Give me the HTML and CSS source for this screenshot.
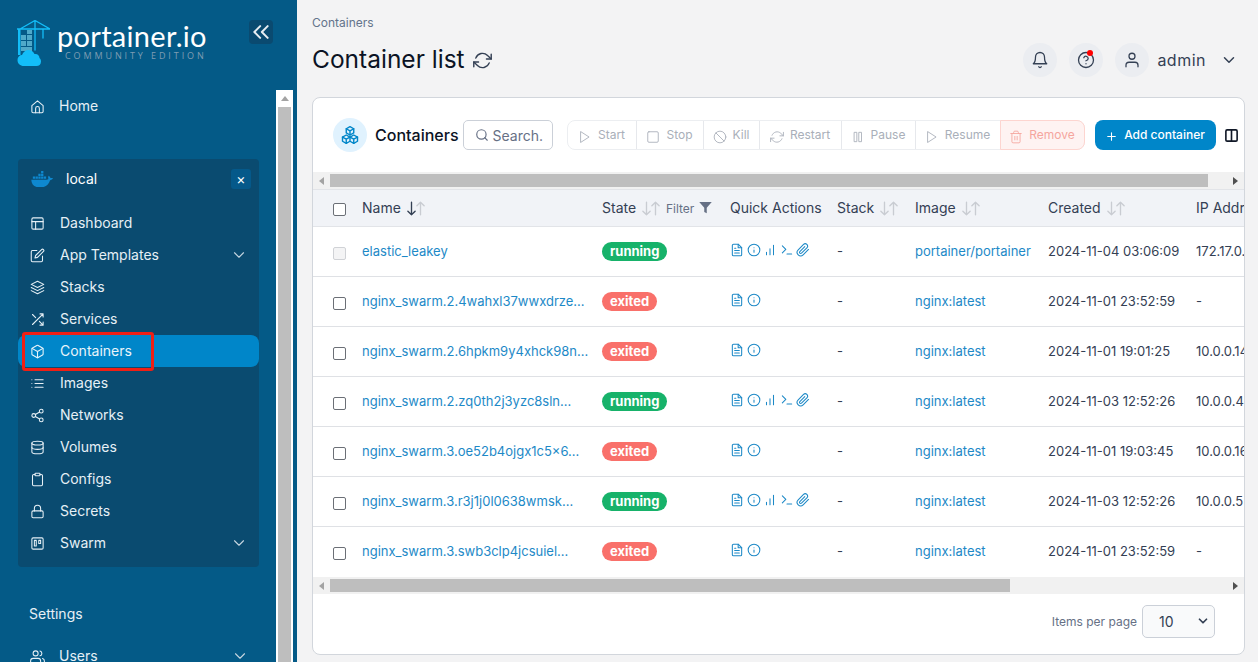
FILE: index.html
```html
<!DOCTYPE html>
<html lang="en">
<head>
    <meta charset="UTF-8">
    <meta name="viewport" content="width=device-width, initial-scale=1.0">
    <title>Portainer - Containers</title>
    <link rel="stylesheet" href="styles.css">
</head>
<body>
    <svg class="sprite" aria-hidden="true">
        <symbol id="i-home" viewBox="0 0 24 24"><path d="M3 10.5 12 3l9 7.5V20a2 2 0 0 1-2 2H5a2 2 0 0 1-2-2z"/><path d="M9 22v-7a3 3 0 0 1 6 0v7"/></symbol>
        <symbol id="i-layout" viewBox="0 0 24 24"><rect x="3" y="3" width="18" height="18" rx="2"/><path d="M3 9h18M9 21V9"/></symbol>
        <symbol id="i-edit" viewBox="0 0 24 24"><path d="M11 4H4a2 2 0 0 0-2 2v14a2 2 0 0 0 2 2h14a2 2 0 0 0 2-2v-7"/><path d="M18.5 2.5a2.121 2.121 0 0 1 3 3L12 15l-4 1 1-4z"/></symbol>
        <symbol id="i-layers" viewBox="0 0 24 24"><path d="m12 2 10 5-10 5L2 7z"/><path d="m2 12 10 5 10-5"/><path d="m2 17 10 5 10-5"/></symbol>
        <symbol id="i-shuffle" viewBox="0 0 24 24"><path d="M16 3h5v5M4 20 21 3M21 16v5h-5M15 15l6 6M4 4l5 5"/></symbol>
        <symbol id="i-box" viewBox="0 0 24 24"><path d="M21 16V8a2 2 0 0 0-1-1.73l-7-4a2 2 0 0 0-2 0l-7 4A2 2 0 0 0 3 8v8a2 2 0 0 0 1 1.73l7 4a2 2 0 0 0 2 0l7-4A2 2 0 0 0 21 16z"/><path d="M3.27 6.96 12 12.01l8.73-5.05M12 22.08V12"/></symbol>
        <symbol id="i-list" viewBox="0 0 24 24"><path d="M8 6h13M8 12h13M8 18h13M3 6h.01M3 12h.01M3 18h.01"/></symbol>
        <symbol id="i-share" viewBox="0 0 24 24"><circle cx="18" cy="5" r="3"/><circle cx="6" cy="12" r="3"/><circle cx="18" cy="19" r="3"/><path d="m8.59 13.51 6.83 3.98M15.41 6.51l-6.82 3.98"/></symbol>
        <symbol id="i-database" viewBox="0 0 24 24"><ellipse cx="12" cy="5" rx="9" ry="3"/><path d="M21 12c0 1.66-4 3-9 3s-9-1.34-9-3"/><path d="M3 5v14c0 1.66 4 3 9 3s9-1.34 9-3V5"/></symbol>
        <symbol id="i-clipboard" viewBox="0 0 24 24"><path d="M16 4h2a2 2 0 0 1 2 2v14a2 2 0 0 1-2 2H6a2 2 0 0 1-2-2V6a2 2 0 0 1 2-2h2"/><rect x="8" y="2" width="8" height="4" rx="1"/></symbol>
        <symbol id="i-lock" viewBox="0 0 24 24"><rect x="3" y="11" width="18" height="11" rx="2"/><path d="M7 11V7a5 5 0 0 1 10 0v4"/></symbol>
        <symbol id="i-trello" viewBox="0 0 24 24"><rect x="3" y="3" width="18" height="18" rx="2"/><rect x="7" y="7" width="3" height="9"/><rect x="14" y="7" width="3" height="5"/></symbol>
        <symbol id="i-users" viewBox="0 0 24 24"><path d="M17 21v-2a4 4 0 0 0-4-4H5a4 4 0 0 0-4 4v2"/><circle cx="9" cy="7" r="4"/><path d="M23 21v-2a4 4 0 0 0-3-3.87M16 3.13a4 4 0 0 1 0 7.75"/></symbol>
        <symbol id="i-chevron" viewBox="0 0 24 24"><path d="m6 9 6 6 6-6"/></symbol>
        <symbol id="i-bell" viewBox="0 0 24 24"><path d="M18 8A6 6 0 0 0 6 8c0 7-3 9-3 9h18s-3-2-3-9"/><path d="M13.73 21a2 2 0 0 1-3.46 0"/></symbol>
        <symbol id="i-help" viewBox="0 0 24 24"><circle cx="12" cy="12" r="10"/><path d="M9.09 9a3 3 0 0 1 5.83 1c0 2-3 3-3 3M12 17h.01"/></symbol>
        <symbol id="i-user" viewBox="0 0 24 24"><path d="M20 21v-2a4 4 0 0 0-4-4H8a4 4 0 0 0-4 4v2"/><circle cx="12" cy="7" r="4"/></symbol>
        <symbol id="i-refresh" viewBox="0 0 24 24"><path d="M23 4v6h-6M1 20v-6h6"/><path d="M3.51 9a9 9 0 0 1 14.85-3.36L23 10M1 14l4.64 4.36A9 9 0 0 0 20.49 15"/></symbol>
        <symbol id="i-search" viewBox="0 0 24 24"><circle cx="11" cy="11" r="8"/><path d="m21 21-4.35-4.35"/></symbol>
        <symbol id="i-play" viewBox="0 0 24 24"><path d="m5 3 14 9-14 9z"/></symbol>
        <symbol id="i-square" viewBox="0 0 24 24"><rect x="3" y="3" width="18" height="18" rx="2"/></symbol>
        <symbol id="i-slash" viewBox="0 0 24 24"><circle cx="12" cy="12" r="10"/><path d="m4.93 4.93 14.14 14.14"/></symbol>
        <symbol id="i-pause" viewBox="0 0 24 24"><rect x="6" y="4" width="4" height="16"/><rect x="14" y="4" width="4" height="16"/></symbol>
        <symbol id="i-trash" viewBox="0 0 24 24"><path d="M3 6h18M19 6v14a2 2 0 0 1-2 2H7a2 2 0 0 1-2-2V6m3 0V4a2 2 0 0 1 2-2h4a2 2 0 0 1 2 2v2M10 11v6M14 11v6"/></symbol>
        <symbol id="i-plus" viewBox="0 0 24 24"><path d="M12 5v14M5 12h14"/></symbol>
        <symbol id="i-columns" viewBox="0 0 24 24"><rect x="3" y="3" width="18" height="18" rx="2"/><path d="M12 3v18"/></symbol>
        <symbol id="i-file" viewBox="0 0 24 24"><path d="M14 2H6a2 2 0 0 0-2 2v16a2 2 0 0 0 2 2h12a2 2 0 0 0 2-2V8z"/><path d="M14 2v6h6M16 13H8M16 17H8M10 9H8"/></symbol>
        <symbol id="i-info" viewBox="0 0 24 24"><circle cx="12" cy="12" r="10"/><path d="M12 16v-4M12 8h.01"/></symbol>
        <symbol id="i-stats" viewBox="0 0 24 24"><path d="M18 20V4M12 20V10M6 20v-4"/></symbol>
        <symbol id="i-terminal" viewBox="0 0 24 24"><path d="m4 17 6-6-6-6M12 19h8"/></symbol>
        <symbol id="i-clip" viewBox="0 0 24 24"><path d="m21.44 11.05-9.19 9.19a6 6 0 0 1-8.49-8.49l9.19-9.19a4 4 0 0 1 5.66 5.66l-9.2 9.19a2 2 0 0 1-2.83-2.83l8.49-8.48"/></symbol>
        <symbol id="i-down" viewBox="0 0 10 16"><path d="M5 1v14M1 11l4 4 4-4"/></symbol>
        <symbol id="i-up" viewBox="0 0 10 16"><path d="M5 15V1M1 5l4-4 4 4"/></symbol>
        <symbol id="i-cubes" viewBox="0 0 24 24"><path d="m12 2 4.500 2.500v5L12 12 7.500 9.500v-5zM7.500 12 12 14.500v5L7.500 22 3 19.500v-5zM16.500 12l4.500 2.500v5L16.500 22 12 19.500v-5z"/><path d="m7.500 4.500 4.500 2.500 4.500-2.500M12 7v5M3 14.500l4.500 2.500 4.500-2.500M7.500 17v5M12 14.500l4.500 2.500 4.500-2.500M16.500 17v5"/></symbol>
    </svg>

    <aside class="sidebar">
        <div class="side_head">
            <div class="logo">
                <svg class="logo_mark" viewBox="0 0 33 46">
                    <g fill="none" stroke="#13bef9" stroke-width="1.300">
                        <path d="M0 9h33M18 .5V30M18 .5 3 9M18 .5 33 9M26 9v9"/>
                    </g>
                    <path fill="#13bef9" d="M1 9h2.500v26H1z"/>
                    <path fill="#4fa9c9" d="M4 15h5v5H4zM10 15h5v5h-5zM4 21h5v5H4zM10 21h5v5h-5zM10 10h5v4h-5zM4 27h11v4H4z"/>
                    <path fill="#13bef9" d="M7 46c-4 0-6.500-2.500-6.500-6 0-3 2-5 4.500-5 1-3 3.500-5 6.500-5 3 0 5 2 6 4 3-.5 5 1.500 5 4 1 1 1.500 2 1.500 3.500 0 3-2 4.500-4.500 4.500z"/>
                </svg>
                <div class="logo_text">
                    <div class="logo_name">portainer.io</div>
                    <div class="logo_edition">COMMUNITY EDITION</div>
                </div>
            </div>
            <button class="collapse_btn"><svg viewBox="0 0 24 24"><path d="m11 5-7 7 7 7M20 5l-7 7 7 7"/></svg></button>
        </div>
        <div class="side_body">
            <div class="side_scroll">
                <a class="home_link"><svg class="ico"><use href="#i-home"/></svg>Home</a>
                <div class="env_panel">
                    <div class="env_head">
                        <svg class="docker" viewBox="0 -2 24 18">
                            <path fill="#0e88cf" d="M5 4h2.500v2.500H5zM8 4h2.500v2.500H8zM11 4h2.500v2.500H11zM8 1h2.500v2.500H8zM11 1h2.500v2.500H11zM11-2h2.500V.5H11zM2 4h2.500v2.500H2zM14 4h2.500v2.500H14z"/>
                            <path fill="#0e88cf" d="M.3 7.500h16.500c1 0 1.800-.3 2.300-.8-.6-1-.7-2.500.2-3.500 1 .6 1.700 1.500 1.900 2.500 1-.3 2.100-.2 2.800.3-.6 1.300-1.800 2-3.200 2C19.500 12.500 16 16 10 16c-6 0-9.500-3-9.700-8.500z"/>
                        </svg>
                        <span class="env_name">local</span>
                        <span class="env_close">×</span>
                    </div>
                    <a class="nav_item"><svg class="ico"><use href="#i-layout"/></svg>Dashboard</a>
                    <a class="nav_item"><svg class="ico"><use href="#i-edit"/></svg>App Templates<svg class="chev"><use href="#i-chevron"/></svg></a>
                    <a class="nav_item"><svg class="ico"><use href="#i-layers"/></svg>Stacks</a>
                    <a class="nav_item"><svg class="ico"><use href="#i-shuffle"/></svg>Services</a>
                    <a class="nav_item active"><svg class="ico"><use href="#i-box"/></svg>Containers<span class="annot"></span></a>
                    <a class="nav_item"><svg class="ico"><use href="#i-list"/></svg>Images</a>
                    <a class="nav_item"><svg class="ico"><use href="#i-share"/></svg>Networks</a>
                    <a class="nav_item"><svg class="ico"><use href="#i-database"/></svg>Volumes</a>
                    <a class="nav_item"><svg class="ico"><use href="#i-clipboard"/></svg>Configs</a>
                    <a class="nav_item"><svg class="ico"><use href="#i-lock"/></svg>Secrets</a>
                    <a class="nav_item"><svg class="ico"><use href="#i-trello"/></svg>Swarm<svg class="chev"><use href="#i-chevron"/></svg></a>
                </div>
                <div class="settings_title">Settings</div>
                <a class="home_link"><svg class="ico"><use href="#i-users"/></svg>Users<svg class="chev"><use href="#i-chevron"/></svg></a>
            </div>
            <div class="vbar">
                <span class="vbar_arrow"></span>
                <span class="vbar_thumb"></span>
            </div>
        </div>
    </aside>

    <main class="main">
        <header class="topbar">
            <div>
                <div class="crumb">Containers</div>
                <h1 class="page_title">Container list <svg class="title_refresh"><use href="#i-refresh"/></svg></h1>
            </div>
            <div class="user_area">
                <span class="round_btn"><svg><use href="#i-bell"/></svg></span>
                <span class="round_btn"><svg><use href="#i-help"/></svg><i class="red_dot"></i></span>
                <span class="round_btn"><svg><use href="#i-user"/></svg></span>
                <span class="user_name">admin</span>
                <svg class="user_chev"><use href="#i-chevron"/></svg>
            </div>
        </header>

        <section class="card">
            <div class="toolbar">
                <span class="title_ico"><svg><use href="#i-cubes"/></svg></span>
                <span class="card_title">Containers</span>
                <span class="search"><svg><use href="#i-search"/></svg>Search.</span>
                <div class="btn_group">
                    <span class="w_start"><svg><use href="#i-play"/></svg>Start</span>
                    <span class="w_stop"><svg><use href="#i-square"/></svg>Stop</span>
                    <span class="w_kill"><svg><use href="#i-slash"/></svg>Kill</span>
                    <span class="w_restart"><svg><use href="#i-refresh"/></svg>Restart</span>
                    <span class="w_pause"><svg><use href="#i-pause"/></svg>Pause</span>
                    <span class="w_resume"><svg><use href="#i-play"/></svg>Resume</span>
                    <span class="w_remove"><svg><use href="#i-trash"/></svg>Remove</span>
                </div>
                <span class="add_btn"><svg><use href="#i-plus"/></svg>Add container</span>
                <svg class="col_toggle"><use href="#i-columns"/></svg>
            </div>

            <div class="hbar">
                <span class="hbar_left"></span>
                <span class="hbar_thumb thumb_top"></span>
                <span class="hbar_right"></span>
            </div>

            <div class="table_wrap">
                <table class="tbl">
                    <colgroup>
                        <col class="c_check"><col class="c_name"><col class="c_state"><col class="c_quick"><col class="c_stack"><col class="c_image"><col class="c_created"><col class="c_ip">
                    </colgroup>
                    <thead>
                        <tr>
                            <th class="cell_check"><span class="box"></span></th>
                            <th>Name <span class="sort sort_on"><svg><use href="#i-down"/></svg><svg><use href="#i-up"/></svg></span></th>
                            <th>State <span class="sort"><svg><use href="#i-down"/></svg><svg><use href="#i-up"/></svg></span> <span class="filter">Filter <svg viewBox="0 0 24 24"><path d="M22 3H2l8 9.460V19l4 2v-8.540z"/></svg></span></th>
                            <th>Quick Actions</th>
                            <th>Stack <span class="sort"><svg><use href="#i-down"/></svg><svg><use href="#i-up"/></svg></span></th>
                            <th>Image <span class="sort"><svg><use href="#i-down"/></svg><svg><use href="#i-up"/></svg></span></th>
                            <th>Created <span class="sort"><svg><use href="#i-down"/></svg><svg><use href="#i-up"/></svg></span></th>
                            <th>IP Address</th>
                        </tr>
                    </thead>
                    <tbody>
                        <tr>
                            <td class="cell_check"><span class="box box_off"></span></td>
                            <td><a class="lnk">elastic_leakey</a></td>
                            <td><span class="badge run">running</span></td>
                            <td class="quick"><svg><use href="#i-file"/></svg><svg><use href="#i-info"/></svg><svg><use href="#i-stats"/></svg><svg><use href="#i-terminal"/></svg><svg><use href="#i-clip"/></svg></td>
                            <td>-</td>
                            <td><a class="lnk">portainer/portainer</a></td>
                            <td>2024-11-04 03:06:09</td>
                            <td>172.17.0.2</td>
                        </tr>
                        <tr>
                            <td class="cell_check"><span class="box"></span></td>
                            <td><a class="lnk">nginx_swarm.2.4wahxl37wwxdrze...</a></td>
                            <td><span class="badge off">exited</span></td>
                            <td class="quick"><svg><use href="#i-file"/></svg><svg><use href="#i-info"/></svg></td>
                            <td>-</td>
                            <td><a class="lnk">nginx:latest</a></td>
                            <td>2024-11-01 23:52:59</td>
                            <td>-</td>
                        </tr>
                        <tr>
                            <td class="cell_check"><span class="box"></span></td>
                            <td><a class="lnk">nginx_swarm.2.6hpkm9y4xhck98n...</a></td>
                            <td><span class="badge off">exited</span></td>
                            <td class="quick"><svg><use href="#i-file"/></svg><svg><use href="#i-info"/></svg></td>
                            <td>-</td>
                            <td><a class="lnk">nginx:latest</a></td>
                            <td>2024-11-01 19:01:25</td>
                            <td>10.0.0.14</td>
                        </tr>
                        <tr>
                            <td class="cell_check"><span class="box"></span></td>
                            <td><a class="lnk">nginx_swarm.2.zq0th2j3yzc8sln...</a></td>
                            <td><span class="badge run">running</span></td>
                            <td class="quick"><svg><use href="#i-file"/></svg><svg><use href="#i-info"/></svg><svg><use href="#i-stats"/></svg><svg><use href="#i-terminal"/></svg><svg><use href="#i-clip"/></svg></td>
                            <td>-</td>
                            <td><a class="lnk">nginx:latest</a></td>
                            <td>2024-11-03 12:52:26</td>
                            <td>10.0.0.4</td>
                        </tr>
                        <tr>
                            <td class="cell_check"><span class="box"></span></td>
                            <td><a class="lnk">nginx_swarm.3.oe52b4ojgx1c5×6...</a></td>
                            <td><span class="badge off">exited</span></td>
                            <td class="quick"><svg><use href="#i-file"/></svg><svg><use href="#i-info"/></svg></td>
                            <td>-</td>
                            <td><a class="lnk">nginx:latest</a></td>
                            <td>2024-11-01 19:03:45</td>
                            <td>10.0.0.16</td>
                        </tr>
                        <tr>
                            <td class="cell_check"><span class="box"></span></td>
                            <td><a class="lnk">nginx_swarm.3.r3j1j0l0638wmsk...</a></td>
                            <td><span class="badge run">running</span></td>
                            <td class="quick"><svg><use href="#i-file"/></svg><svg><use href="#i-info"/></svg><svg><use href="#i-stats"/></svg><svg><use href="#i-terminal"/></svg><svg><use href="#i-clip"/></svg></td>
                            <td>-</td>
                            <td><a class="lnk">nginx:latest</a></td>
                            <td>2024-11-03 12:52:26</td>
                            <td>10.0.0.5</td>
                        </tr>
                        <tr>
                            <td class="cell_check"><span class="box"></span></td>
                            <td><a class="lnk">nginx_swarm.3.swb3clp4jcsuiel...</a></td>
                            <td><span class="badge off">exited</span></td>
                            <td class="quick"><svg><use href="#i-file"/></svg><svg><use href="#i-info"/></svg></td>
                            <td>-</td>
                            <td><a class="lnk">nginx:latest</a></td>
                            <td>2024-11-01 23:52:59</td>
                            <td>-</td>
                        </tr>
                    </tbody>
                </table>
            </div>

            <div class="hbar">
                <span class="hbar_left"></span>
                <span class="hbar_thumb thumb_bottom"></span>
                <span class="hbar_right"></span>
            </div>

            <div class="pager">
                <span>Items per page</span>
                <span class="page_select">10<svg><use href="#i-chevron"/></svg></span>
            </div>
        </section>
    </main>
</body>
</html>
```

FILE: styles.css
```css
* {
    box-sizing: border-box;
}
body {
    margin: 0;
    display: flex;
    height: 662px;
    overflow: hidden;
    background: #f3f3f4;
    color: #1f2937;
    font-family: Inter, "Noto Sans", sans-serif;
    font-size: 13px;
}
.sprite {
    display: none;
}
svg {
    fill: none;
    stroke: currentColor;
    stroke-width: 2;
    stroke-linecap: round;
    stroke-linejoin: round;
}

/* sidebar */
.sidebar {
    flex: 0 0 297px;
    height: 662px;
    background: #045a87;
    color: #e6f0f6;
    display: flex;
    flex-direction: column;
    padding-right: 4px;
}
.side_head {
    flex: 0 0 90px;
    display: flex;
    justify-content: space-between;
    padding: 20px 20px 0 17px;
}
.logo {
    display: flex;
    align-items: flex-start;
}
.logo_mark {
    width: 33px;
    height: 46px;
    stroke: none;
}
.logo_text {
    margin-left: 7px;
    padding-top: 2px;
}
.logo_name {
    font-family: Lato, sans-serif;
    color: #fff;
    font-size: 29px;
    line-height: 28px;
    letter-spacing: 0.3px;
}
.logo_edition {
    font-family: "Open Sans", sans-serif;
    color: #7f9db3;
    font-size: 9px;
    line-height: 9px;
    letter-spacing: 2.900px;
    margin: 1px 0 0 8px;
    white-space: nowrap;
}
.collapse_btn {
    width: 24px;
    height: 24px;
    border: none;
    border-radius: 4px;
    padding: 2px;
    background: #0a4a70;
    color: #e8edf2;
}
.collapse_btn svg {
    display: block;
    width: 20px;
    height: 20px;
    stroke-width: 2.400;
}
.side_body {
    flex: 1;
    display: flex;
    min-height: 0;
}
.side_scroll {
    flex: 1;
    min-width: 0;
    overflow: hidden;
}
.vbar {
    flex: 0 0 17px;
    background: #fff;
    display: flex;
    flex-direction: column;
    align-items: center;
}
.vbar_arrow {
    flex: 0 0 5px;
    width: 0;
    height: 0;
    margin-top: 6px;
    border: 4px solid transparent;
    border-top: none;
    border-bottom: 5px solid #a3a3a3;
}
.vbar_thumb {
    flex: 1;
    width: 13px;
    margin-top: 6px;
    background: #bebebe;
}
.ico {
    width: 15px;
    height: 15px;
    flex: none;
    margin-top: 2px;
    stroke-width: 1.700;
}
.chev {
    width: 18px;
    height: 18px;
    margin-top: 2px;
    margin-left: auto;
    stroke-width: 1.500;
    color: #c5d5e0;
}
.home_link {
    display: flex;
    align-items: center;
    height: 32px;
    padding: 0 27px 2px 30px;
    font-size: 14px;
}
.home_link .ico {
    margin-right: 14px;
}
.env_panel {
    margin: 37px 17px 0 18px;
    background: #0a4b70;
    border-radius: 4px;
    padding-bottom: 8px;
}
.env_head {
    display: flex;
    align-items: center;
    height: 48px;
    padding: 0 8px 8px 13px;
    font-size: 14px;
    color: #fff;
}
.docker {
    width: 22px;
    height: 16.500px;
    margin-right: 13px;
    stroke: none;
}
.env_name {
    margin-top: -2px;
}
.env_close {
    margin-left: auto;
    width: 20px;
    height: 20px;
    border-radius: 3px;
    background: #05598a;
    text-align: center;
    line-height: 20px;
    font-size: 14px;
}
.nav_item {
    position: relative;
    display: flex;
    align-items: center;
    height: 32px;
    padding: 0 11px 2px 12px;
    border-radius: 8px;
    font-size: 14px;
}
.nav_item .ico {
    margin-right: 15px;
}
.nav_item.active {
    background: #0086c9;
    color: #e8f4fb;
}
.annot {
    position: absolute;
    left: 4px;
    top: -3px;
    width: 132px;
    height: 39px;
    border: 3px solid #f01f14;
    border-radius: 3px;
}
.settings_title {
    margin: 38px 0 18px 29px;
    font-size: 14px;
    line-height: 17px;
}

/* main */
.main {
    flex: 1;
    min-width: 0;
    padding: 0 13px 0 15px;
}
.topbar {
    height: 97px;
    display: flex;
    justify-content: space-between;
    padding-top: 15px;
}
.crumb {
    font-size: 12px;
    line-height: 16px;
    color: #64748b;
}
.page_title {
    margin: 13px 0 0;
    font-size: 24.500px;
    line-height: 30px;
    font-weight: 400;
    color: #0b1324;
    display: flex;
    align-items: center;
    gap: 8px;
}
.title_refresh {
    width: 19px;
    height: 19px;
    stroke-width: 1.800;
    color: #344054;
    margin-top: 2px;
}
.user_area {
    display: flex;
    align-items: center;
    height: 60px;
    margin-right: 7px;
    padding-top: 30px;
    color: #344054;
}
.round_btn {
    position: relative;
    width: 34px;
    height: 34px;
    border-radius: 50%;
    background: #ebedf1;
    margin-left: 12px;
    display: flex;
    align-items: center;
    justify-content: center;
}
.round_btn svg {
    width: 18px;
    height: 18px;
    stroke-width: 1.700;
}
.red_dot {
    position: absolute;
    top: 7px;
    right: 10px;
    width: 6px;
    height: 6px;
    border-radius: 50%;
    background: #f00;
}
.user_name {
    margin-left: 8px;
    font-size: 16px;
    letter-spacing: 0.5px;
}
.user_chev {
    width: 18px;
    height: 18px;
    margin-left: 14px;
}

/* card */
.card {
    height: 558px;
    background: #fff;
    border: 1px solid #d2d6dc;
    border-radius: 8px;
    overflow: hidden;
}
.toolbar {
    height: 74px;
    display: flex;
    align-items: center;
    padding: 0 6px 0 20px;
    color: #0b1324;
}
.toolbar > * {
    flex: none;
}
.title_ico {
    width: 34px;
    height: 34px;
    border-radius: 50%;
    background: #e0f2fe;
    color: #0086c9;
    display: flex;
    align-items: center;
    justify-content: center;
}
.title_ico svg {
    width: 20px;
    height: 20px;
    stroke-width: 1.700;
}
.card_title {
    margin-left: 8px;
    font-size: 16px;
    font-weight: 500;
}
.toolbar .search {
    margin-left: 4px;
    width: 90px;
    height: 30px;
    border: 1px solid #cbd0d8;
    border-radius: 5px;
    display: flex;
    align-items: center;
    padding-left: 11px;
    gap: 4px;
    font-size: 14px;
    color: #667085;
}
.search svg {
    width: 14px;
    height: 14px;
}
.btn_group {
    margin-left: 14px;
    display: flex;
    height: 30px;
    border: 1px solid #eceef1;
    border-radius: 8px;
    font-size: 12px;
    color: #a9afb9;
}
.btn_group span {
    display: flex;
    align-items: center;
    justify-content: center;
    gap: 6px;
    padding-bottom: 2px;
    border-left: 1px solid #e6e8ec;
}
.btn_group span:first-child {
    border-left: none;
}
.btn_group svg {
    width: 14px;
    height: 14px;
    margin-top: 5px;
    stroke-width: 1.500;
}
.w_start { width: 68px; }
.w_stop { width: 67px; }
.w_kill { width: 56px; }
.w_restart { width: 82px; }
.w_pause { width: 74px; }
.w_resume { width: 85px; }
.btn_group .w_remove {
    width: 85px;
    margin: -1px -1px -1px 0;
    background: #fef3f2;
    border: 1px solid #fdd5d0;
    border-radius: 0 8px 8px 0;
    color: #f5a69e;
}
.toolbar .add_btn {
    margin-left: 10px;
    width: 121px;
    height: 30px;
    padding-bottom: 2px;
    border-radius: 8px;
    background: #0086c9;
    color: #fff;
    font-size: 12px;
    font-weight: 500;
    display: flex;
    align-items: center;
    justify-content: center;
    gap: 6px;
}
.add_btn svg {
    width: 13px;
    height: 13px;
    margin-top: 5px;
}
.col_toggle {
    width: 15px;
    height: 15px;
    margin-left: 8px;
    color: #111827;
    stroke-width: 2.600;
}

/* scrollbars of the table */
.hbar {
    height: 17px;
    background: #f1f1f1;
    display: flex;
    align-items: center;
}
.hbar_left,
.hbar_right {
    flex: 0 0 17px;
    display: flex;
    align-items: center;
    justify-content: center;
}
.hbar_left::before {
    content: "";
    border: 4px solid transparent;
    border-left: none;
    border-right: 5px solid #a3a3a3;
}
.hbar_right {
    margin-left: auto;
}
.hbar_right::before {
    content: "";
    border: 4px solid transparent;
    border-right: none;
    border-left: 5px solid #505050;
}
.hbar_thumb {
    height: 13px;
    background: #bebebe;
}
.thumb_top { width: 878px; }
.thumb_bottom { width: 680px; }

/* table */
.table_wrap {
    height: 388px;
    overflow: hidden;
}
.tbl {
    width: 991px;
    table-layout: fixed;
    border-collapse: collapse;
    white-space: nowrap;
}
.c_check { width: 37px; }
.c_name { width: 240px; }
.c_state { width: 128px; }
.c_quick { width: 107px; }
.c_stack { width: 78px; }
.c_image { width: 133px; }
.c_created { width: 148px; }
.c_ip { width: 120px; }
.tbl th {
    height: 37px;
    background: #f1f3f7;
    border-top: 1px solid #e2e4e8;
    border-bottom: 1px solid #e2e4e8;
    font-size: 14px;
    font-weight: 400;
    text-align: left;
    padding: 0 0 1px 12px;
    color: #344054;
}
.tbl td {
    height: 50px;
    border-bottom: 1px solid #dfe1e5;
    padding: 0 0 2px 12px;
    color: #344054;
    overflow: hidden;
}
.tbl tr:last-child td {
    border-bottom: none;
}
.tbl .cell_check {
    padding: 4px 0 0 20px;
}
.tbl th.cell_check {
    padding-top: 3px;
}
.box {
    display: block;
    width: 13px;
    height: 13px;
    background: #fff;
    border: 1px solid #6b6f76;
    border-radius: 2px;
}
.box_off {
    border-color: #d0d2d6;
    background: #f4f4f5;
}
.lnk {
    color: #1d89c7;
}
.sort {
    display: inline-flex;
    vertical-align: -3px;
    margin-left: 2px;
    color: #c9ccd2;
}
.sort svg {
    width: 9px;
    height: 15px;
    stroke-width: 1.500;
}
.sort_on svg:first-child {
    color: #344054;
}
.filter {
    margin-left: 2px;
    font-size: 12px;
    color: #667085;
}
.filter svg {
    width: 15px;
    height: 15px;
    vertical-align: -2px;
    fill: #667085;
    stroke: none;
}
.badge {
    display: inline-block;
    height: 19px;
    line-height: 19px;
    padding: 0 8px;
    margin-top: 2px;
    border-radius: 10px;
    font-size: 13px;
    font-weight: 700;
    color: #fff;
}
.run {
    background: #17b26a;
}
.off {
    background: #f9706a;
}
.tbl .quick {
    padding-bottom: 0;
    color: #1d89c7;
}
.quick svg {
    width: 14px;
    height: 14px;
    margin-right: 2.500px;
    stroke-width: 1.800;
}

/* footer */
.pager {
    display: flex;
    align-items: center;
    justify-content: flex-end;
    gap: 5px;
    height: 60px;
    padding: 0 29px 6px 0;
    font-size: 12px;
    color: #667085;
}
.page_select {
    width: 73px;
    height: 33px;
    border: 1px solid #cbd0d8;
    border-radius: 5px;
    background: #f9fafb;
    display: flex;
    align-items: center;
    justify-content: space-between;
    padding: 0 4px 0 16px;
    font-size: 14px;
    color: #344054;
}
.page_select svg {
    width: 14px;
    height: 14px;
    stroke-width: 3;
}
```
